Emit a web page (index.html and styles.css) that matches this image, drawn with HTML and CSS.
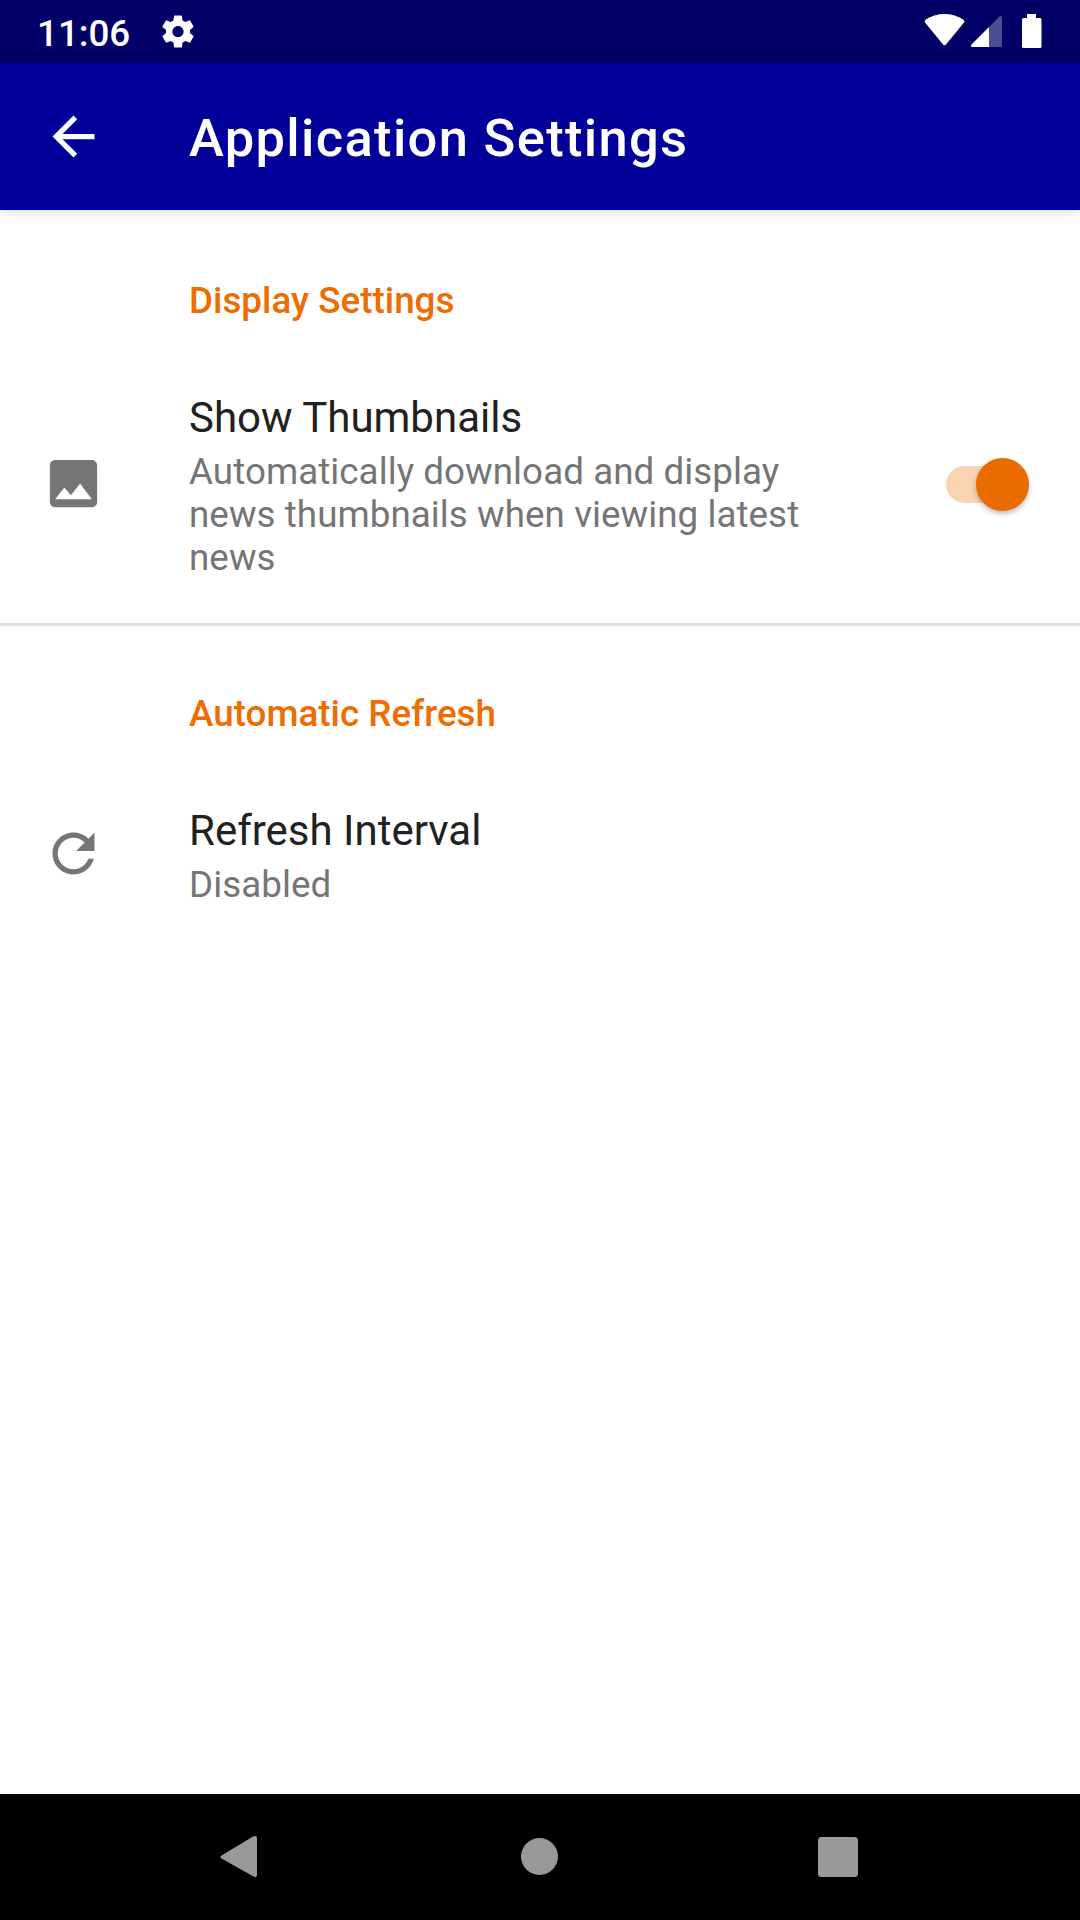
FILE: index.html
```html
<!DOCTYPE html>
<html lang="en">
<head>
<meta charset="utf-8">
<title>Application Settings</title>
<link rel="stylesheet" href="styles.css">
</head>
<body>
<div class="screen">
  <div class="status">
    <span class="time">11:06</span>
    <svg class="gear" viewBox="2 2 20 20"><path fill="#fff" d="M19.43 12.98c.04-.32.07-.64.07-.98s-.03-.66-.07-.98l2.11-1.65c.19-.15.24-.42.12-.64l-2-3.46c-.12-.22-.39-.3-.61-.22l-2.49 1c-.52-.4-1.08-.73-1.69-.98l-.38-2.65C14.46 2.18 14.25 2 14 2h-4c-.25 0-.46.18-.49.42l-.38 2.65c-.61.25-1.17.59-1.69.98l-2.49-1c-.23-.09-.49 0-.61.22l-2 3.46c-.13.22-.07.49.12.64l2.11 1.65c-.04.32-.07.65-.07.98s.03.66.07.98l-2.11 1.65c-.19.15-.24.42-.12.64l2 3.46c.12.22.39.3.61.22l2.49-1c.52.4 1.08.73 1.69.98l.38 2.65c.03.24.24.42.49.42h4c.25 0 .46-.18.49-.42l.38-2.65c.61-.25 1.17-.59 1.69-.98l2.49 1c.23.09.49 0 .61-.22l2-3.46c.12-.22.07-.49-.12-.64l-2.11-1.65zM12 15.5c-1.93 0-3.5-1.57-3.5-3.5s1.57-3.5 3.5-3.5 3.5 1.57 3.5 3.5-1.57 3.5-3.5 3.5z"/></svg>
    <svg class="indicators" viewBox="0 0 120 36">
      <path fill="#fff" d="M1 8.5Q0 7 1.5 5.800Q10 0 20.500 0Q31 0 39.500 5.800Q41 7 40 8.500L22 30.500Q20.500 32.200 19 30.500Z"/>
      <path fill="#fff" d="M65 13V33H48Q46 32.500 47.500 30.500Z"/>
      <path fill="#4d4d94" d="M65 13L75.500 2.500Q78 1 78 3.500V33H65Z"/>
      <path fill="#fff" d="M103 0H112V4H116Q117.500 4 117.500 5.500V32.500Q117.500 34 116 34H99.500Q98 34 98 32.500V5.500Q98 4 99.500 4H103Z"/>
    </svg>
  </div>
  <header class="appbar">
    <svg class="icon" viewBox="0 0 24 24"><path fill="#fff" d="M20 11H7.830l5.590-5.590L12 4l-8 8 8 8 1.410-1.410L7.830 13H20v-2z"/></svg>
    <h1>Application Settings</h1>
  </header>
  <main>
    <section>
      <h2>Display Settings</h2>
      <div class="row">
        <svg class="icon" viewBox="0 0 24 24"><path fill="#757575" d="M21 19V5c0-1.100-.9-2-2-2H5c-1.100 0-2 .9-2 2v14c0 1.100.9 2 2 2h14c1.100 0 2-.9 2-2zM8.500 13.500l2.500 3.010L14.500 12l4.500 6H5l3.500-4.500z"/></svg>
        <div class="text">
          <div class="title">Show Thumbnails</div>
          <div class="summary">Automatically download and display<br>news thumbnails when viewing latest<br>news</div>
        </div>
        <div class="switch"><div class="thumb"></div></div>
      </div>
    </section>
    <section class="divided">
      <h2>Automatic Refresh</h2>
      <div class="row">
        <svg class="icon" viewBox="0 0 24 24"><path fill="#757575" d="M17.650 6.350C16.200 4.900 14.210 4 12 4c-4.420 0-7.990 3.580-7.990 8s3.570 8 7.990 8c3.730 0 6.840-2.550 7.730-6h-2.080c-.82 2.330-3.040 4-5.650 4-3.310 0-6-2.690-6-6s2.690-6 6-6c1.660 0 3.140.69 4.220 1.780L13 11h7V4l-2.350 2.350z"/></svg>
        <div class="text">
          <div class="title">Refresh Interval</div>
          <div class="summary">Disabled</div>
        </div>
      </div>
    </section>
  </main>
  <nav class="navbar">
    <svg viewBox="0 0 48 48"><path fill="#999" d="M6.500 22.500L38 3.600Q42 1.700 42 5V42Q42 45.300 38.500 43.500L6.500 25.500Q4 24 6.500 22.500Z"/></svg>
    <svg viewBox="0 0 48 48"><circle cx="24.500" cy="23.500" r="18.500" fill="#999"/></svg>
    <svg viewBox="0 0 48 48"><rect x="4" y="4" width="40" height="40" rx="3.500" fill="#999"/></svg>
  </nav>
</div>
</body>
</html>
```
FILE: styles.css
```css
* { box-sizing: border-box; }
body { margin: 0; font-family: Roboto, sans-serif; }
h1, h2 { margin: 0; font-weight: 500; white-space: nowrap; }
svg { display: block; flex: none; }
.screen { display: flex; flex-direction: column; width: 1080px; height: 1920px; background: #fff; overflow: hidden; }
.status { display: flex; align-items: flex-start; height: 63px; padding: 0 36px 0 37px; background: #006; color: #fff; }
.time { width: 125px; padding-top: 12px; font-size: 36.75px; line-height: 44px; font-weight: 500; }
.gear { width: 32px; height: 33px; margin-top: 15px; }
.indicators { width: 120px; height: 36px; margin: 14px 0 0 auto; }
.appbar { position: relative; display: flex; align-items: center; height: 147px; padding-left: 42px; background: #009; color: #fff; box-shadow: 0 2px 10px rgba(0,0,0,.14); }
.icon { width: 63px; height: 63px; margin-right: 84px; }
h1 { font-size: 52.5px; line-height: 62px; letter-spacing: 1.32px; padding-top: 3px; }
main { flex: 1; }
section { height: 413px; }
.divided { border-top: 3px solid #e0e0e0; }
.divided h2 { padding-top: 66px; height: 138px; }
h2 { height: 141px; padding: 69px 0 0 189px; font-size: 36.75px; line-height: 43px; color: #ef6c00; letter-spacing: .03px; }
.row { display: flex; align-items: center; padding: 42px 49px 48px 42px; }
.row .icon { margin-bottom: 5px; }
.text { flex: 1; white-space: nowrap; }
.title { padding-bottom: 8px; font-size: 42px; line-height: 49px; color: #212121; }
.summary { font-size: 36.75px; line-height: 43px; color: #757575; letter-spacing: .06px; }
.switch { display: flex; align-items: center; width: 83px; height: 37px; margin: 0 2px 3px 0; border-radius: 19px; background: #fad3b2; }
.thumb { width: 53px; height: 53px; margin-left: auto; border-radius: 50%; background: #ea6b00; box-shadow: 0 3px 5px rgba(0,0,0,.25); }
.navbar { display: flex; justify-content: space-between; align-items: center; height: 126px; padding: 0 218px 0 215px; background: #000; }
.navbar svg { width: 48px; height: 48px; }
```
